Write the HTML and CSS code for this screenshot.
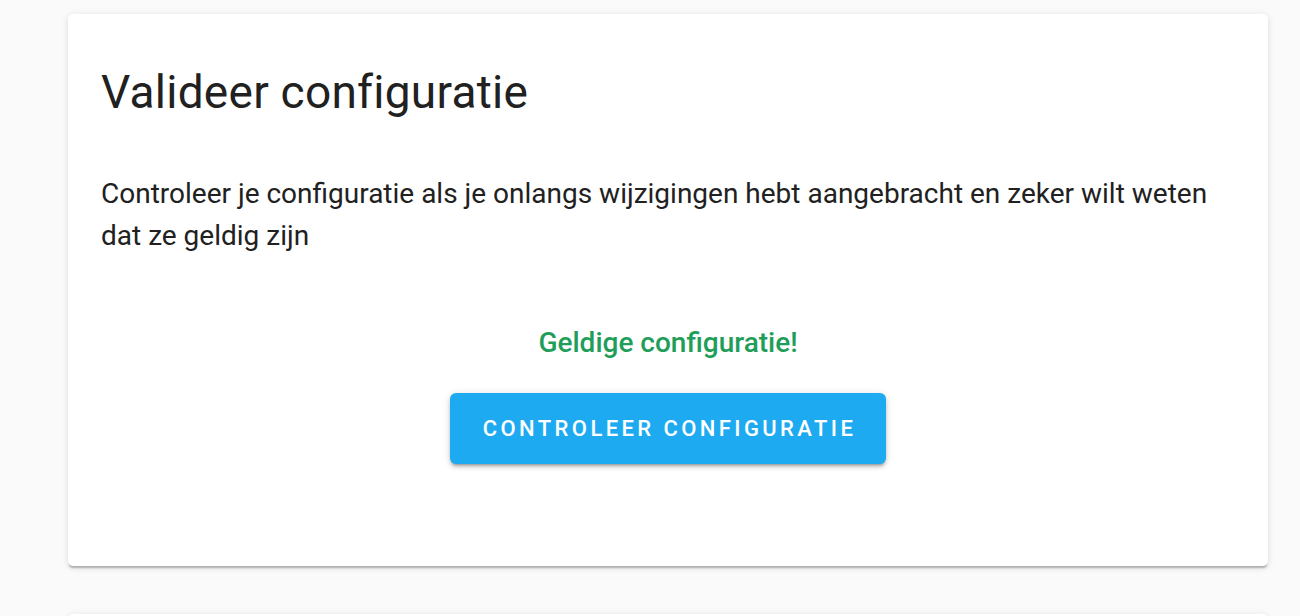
FILE: index.html
```html
<!DOCTYPE html>
<html>
<head>
<meta charset="utf-8">
<link rel="stylesheet" href="styles.css">
</head>
<body>
<div class="page">
  <div class="card">
    <h1 class="card-title">Valideer configuratie</h1>
    <p class="card-text">Controleer je configuratie als je onlangs wijzigingen hebt aangebracht en zeker wilt weten dat ze geldig zijn</p>
    <div class="result">
      <div class="valid">Geldige configuratie!</div>
      <button class="btn">Controleer configuratie</button>
    </div>
  </div>
  <div class="card card-next"></div>
</div>
</body>
</html>
```
FILE: styles.css
```css
html, body {
  margin: 0;
  padding: 0;
  background: #fafafa;
  font-family: Roboto, "Liberation Sans", sans-serif;
  overflow: hidden;
}
.page {
  padding: 14px 0 0 68px;
  display: flex;
  flex-direction: column;
  gap: 48px;
}
.card {
  width: 1200px;
  background: #fff;
  border-radius: 5px;
  box-shadow: 0 3px 2px -1px rgba(0,0,0,0.25), 0 2px 6px 0 rgba(0,0,0,0.08), 0 1px 10px 0 rgba(0,0,0,0.05);
  box-sizing: border-box;
  padding: 0 33px;
}
.card-title {
  margin: 0;
  padding-top: 48px;
  font-size: 46px;
  font-weight: 400;
  line-height: 60px;
  letter-spacing: 0.25px;
  color: #212121;
}
.card-text {
  margin: 51px 0 0;
  font-size: 28px;
  line-height: 42px;
  color: #212121;
}
.result {
  display: flex;
  flex-direction: column;
  align-items: center;
  padding: 69px 0 102px;
}
.valid {
  color: #1f9e5a;
  font-size: 28px;
  font-weight: 500;
  line-height: 34px;
}
.btn {
  margin-top: 33px;
  width: 436px;
  height: 71px;
  border: none;
  border-radius: 6px;
  background: #1eaaf1;
  color: #fff;
  font-family: Roboto, "Liberation Sans", sans-serif;
  font-size: 22px;
  font-weight: 500;
  letter-spacing: 3.4px;
  padding: 0 0 0 3px;
  text-transform: uppercase;
  box-shadow: 0 3px 3px -2px rgba(0,0,0,0.3), 0 3px 4px 0 rgba(0,0,0,0.14), 0 1px 8px 0 rgba(0,0,0,0.12);
}
.card-next {
  height: 100px;
}
```
